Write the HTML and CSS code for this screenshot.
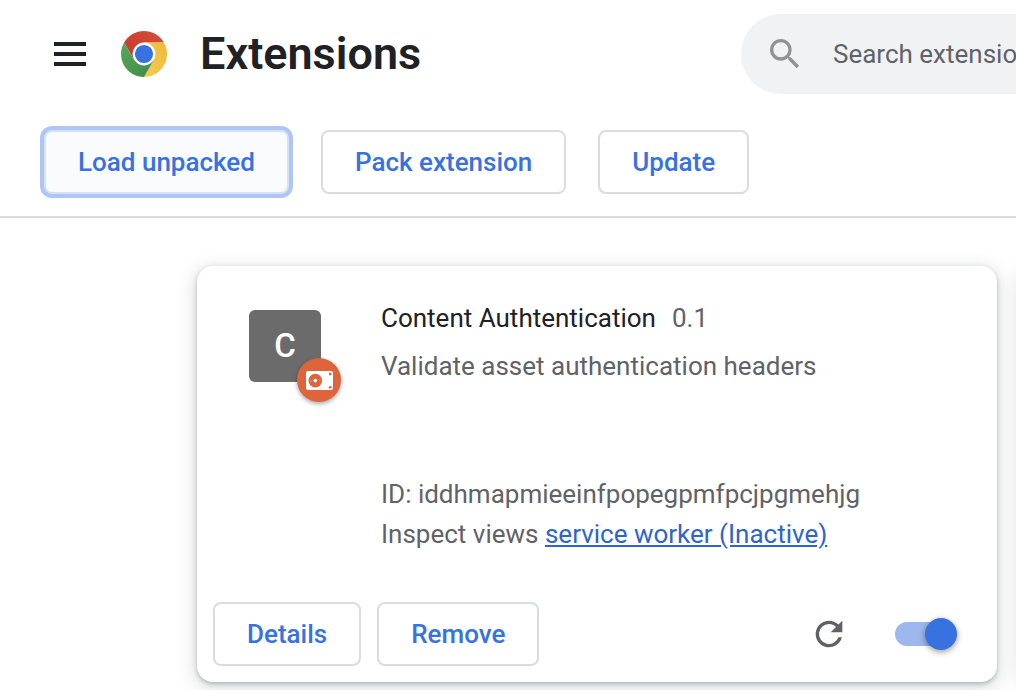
FILE: index.html
```html
<!DOCTYPE html>
<html lang="en">
<head>
<meta charset="utf-8">
<meta name="viewport" content="width=device-width, initial-scale=1">
<title>Extensions</title>
<link rel="stylesheet" href="styles.css">
</head>
<body>
<header class="header">
  <div class="brand">
    <button class="icon-button" type="button" aria-label="Main menu">
      <svg width="32" height="24" viewBox="0 0 32 24" fill="currentColor"><path d="M0 0h32v4H0zM0 10h32v4H0zM0 20h32v4H0z"/></svg>
    </button>
    <svg class="logo" width="46" height="46" viewBox="0 0 46 46" aria-hidden="true">
      <defs>
        <linearGradient id="red" x1="0" y1="1" x2="1" y2="0"><stop offset="0" stop-color="#c03a2c"/><stop offset="1" stop-color="#da4c3d"/></linearGradient>
        <linearGradient id="green" x1="0" y1="0" x2="1" y2="1"><stop offset="0" stop-color="#57a85d"/><stop offset="1" stop-color="#3f8a47"/></linearGradient>
        <linearGradient id="yellow" x1="1" y1="0" x2="0" y2="1"><stop offset="0" stop-color="#f0b93a"/><stop offset="1" stop-color="#f6cb50"/></linearGradient>
      </defs>
      <path fill="url(#red)" d="M3.1 11.5A23 23 0 0 1 42.9 11.5H23L13 28.8z"/>
      <path fill="url(#yellow)" d="M42.9 11.5A23 23 0 0 1 23 46L33 28.8 23 11.5z"/>
      <path fill="url(#green)" d="M23 46A23 23 0 0 1 3.1 11.5L13 28.8H33z"/>
      <circle cx="23" cy="23" r="11.4" fill="#fff"/>
      <circle cx="23" cy="23" r="9.1" fill="#3871e0"/>
    </svg>
    <h1 class="title">Extensions</h1>
  </div>
  <label class="search">
    <svg class="search-icon" width="40" height="40" viewBox="0 0 24 24" fill="currentColor" aria-hidden="true"><path d="M15.5 14h-.79l-.28-.27A6.47 6.47 0 0 0 16 9.5 6.5 6.5 0 1 0 9.5 16c1.61 0 3.09-.59 4.23-1.57l.27.28v.79l5 4.99L20.49 19l-4.99-5zm-6 0C7.01 14 5 11.99 5 9.5S7.01 5 9.5 5 14 7.01 14 9.5 11.99 14 9.5 14z"/></svg>
    <input class="search-input" type="search" placeholder="Search extensions" aria-label="Search extensions">
  </label>
</header>

<nav class="toolbar" aria-label="Developer tools">
  <button class="button button-focused" type="button">Load unpacked</button>
  <button class="button" type="button">Pack extension</button>
  <button class="button" type="button">Update</button>
</nav>

<main class="cards">
  <article class="card">
    <div class="card-main">
      <div class="app-icon">C
        <span class="badge">
          <svg width="27" height="19" viewBox="0 0 27 19" aria-hidden="true">
            <rect width="27" height="19" rx="2" fill="#fff"/>
            <circle cx="9.3" cy="9.6" r="6.8" fill="#de643b"/>
            <circle cx="9.3" cy="9.6" r="1.8" fill="#fff"/>
            <path d="M3.3 10.5l3-.3M12.5 9l3-.3" stroke="#e98d6c" stroke-width=".8"/>
            <circle cx="24.2" cy="3" r="1.4" fill="#de643b"/>
            <circle cx="24.2" cy="16.3" r="1.4" fill="#de643b"/>
          </svg>
        </span>
      </div>
      <div class="details">
        <h2 class="name">Content Authtentication <span class="version">0.1</span></h2>
        <p class="description">Validate asset authentication headers</p>
        <p class="line">ID: iddhmapmieeinfpopegpmfpcjpgmehjg</p>
        <p class="line">Inspect views <a class="link" href="#">service worker (Inactive)</a></p>
      </div>
    </div>
    <div class="actions">
      <button class="button" type="button">Details</button>
      <button class="button" type="button">Remove</button>
      <button class="icon-button reload" type="button" aria-label="Reload">
        <svg width="40" height="40" viewBox="0 0 24 24" fill="currentColor"><path d="M17.65 6.35A7.96 7.96 0 0 0 12 4a8 8 0 1 0 7.73 10h-2.08A6 6 0 1 1 12 6c1.66 0 3.14.69 4.22 1.78L13 11h7V4l-2.35 2.35z"/></svg>
      </button>
      <input class="toggle" type="checkbox" checked aria-label="Enable Content Authtentication">
    </div>
  </article>
  <article class="card"></article>
</main>
</body>
</html>
```
FILE: styles.css
```css
* {
  box-sizing: border-box;
}

body {
  margin: 0;
  overflow: hidden;
  background: #fff;
  color: #202124;
  font: 400 26px/40px Roboto, "Liberation Sans", sans-serif;
}

h1,
h2,
p {
  margin: 0;
  font-weight: 400;
}

button,
input {
  font: inherit;
}

svg {
  display: block;
}

.header {
  display: flex;
  padding: 14px 0;
}

.brand {
  display: flex;
  flex: 0 0 741px;
  align-items: center;
  padding-left: 54px;
}

.icon-button {
  padding: 0;
  border: 0;
  background: none;
  color: inherit;
}

.logo {
  margin: 0 33px 0 35px;
}

.title {
  font-size: 45px;
  font-weight: 600;
}

.search {
  display: flex;
  flex: 0 0 1360px;
  align-items: center;
  gap: 28px;
  height: 80px;
  padding: 0 24px;
  border-radius: 40px;
  background: #f1f2f4;
}

.search-icon {
  color: #909294;
}

.search-input {
  flex: 1;
  padding: 0;
  border: 0;
  outline: 0;
  background: none;
}

.search-input::placeholder {
  color: #5f6368;
}

.toolbar {
  display: flex;
  gap: 32px;
  padding: 22px 44px;
  border-bottom: 2px solid #dadce0;
}

.button {
  height: 64px;
  padding: 0 32px;
  border: 2px solid #dadce0;
  border-radius: 8px;
  background: #fff;
  color: #3871e0;
  font-weight: 500;
  white-space: nowrap;
}

.button-focused {
  border-color: #d5e1f8;
  background: #f9fbff;
  box-shadow: 0 0 0 4px #afc6f3;
}

.cards {
  display: grid;
  grid-template-columns: repeat(2, 800px);
  gap: 24px;
  padding: 48px 0 8px 197px;
}

.card {
  display: flex;
  flex-direction: column;
  min-height: 416px;
  padding: 32px 16px 16px;
  border-radius: 16px;
  background: #fff;
  box-shadow: 0 2px 4px rgba(60, 64, 67, 0.3), 0 4px 16px 4px rgba(60, 64, 67, 0.15);
}

.card-main {
  display: flex;
  flex: 1;
  gap: 60px;
  padding-left: 36px;
}

.app-icon {
  position: relative;
  width: 72px;
  height: 72px;
  margin-top: 12px;
  border-radius: 6px;
  background: #6b6b6b;
  color: #fff;
  font-size: 33px;
  font-weight: 500;
  line-height: 72px;
  text-align: center;
}

.badge {
  position: absolute;
  right: -20px;
  bottom: -20px;
  display: grid;
  place-items: center;
  width: 44px;
  height: 44px;
  border-radius: 50%;
  background: #de643b;
  box-shadow: 0 2px 4px rgba(0, 0, 0, 0.35);
}

.name {
  display: flex;
  gap: 16px;
  margin-bottom: 8px;
  font-size: 26px;
}

.version,
.description,
.line {
  color: #5f6368;
}

.description {
  height: 128px;
}

.link {
  color: #2f64cc;
  text-decoration: underline;
}

.actions {
  display: flex;
  align-items: center;
  gap: 16px;
}

.reload {
  margin-left: auto;
  color: #5f6368;
}

.toggle {
  display: grid;
  align-items: center;
  width: 62px;
  height: 32px;
  margin: 0 24px 0 30px;
  appearance: none;
}

.toggle::before,
.toggle::after {
  grid-area: 1 / 1;
  border-radius: 16px;
  content: "";
}

.toggle::before {
  width: 56px;
  height: 24px;
  background: #9cb8ef;
}

.toggle::after {
  justify-self: end;
  width: 32px;
  height: 32px;
  background: #3871e0;
  box-shadow: 0 2px 6px rgba(0, 0, 0, 0.4);
}
```
